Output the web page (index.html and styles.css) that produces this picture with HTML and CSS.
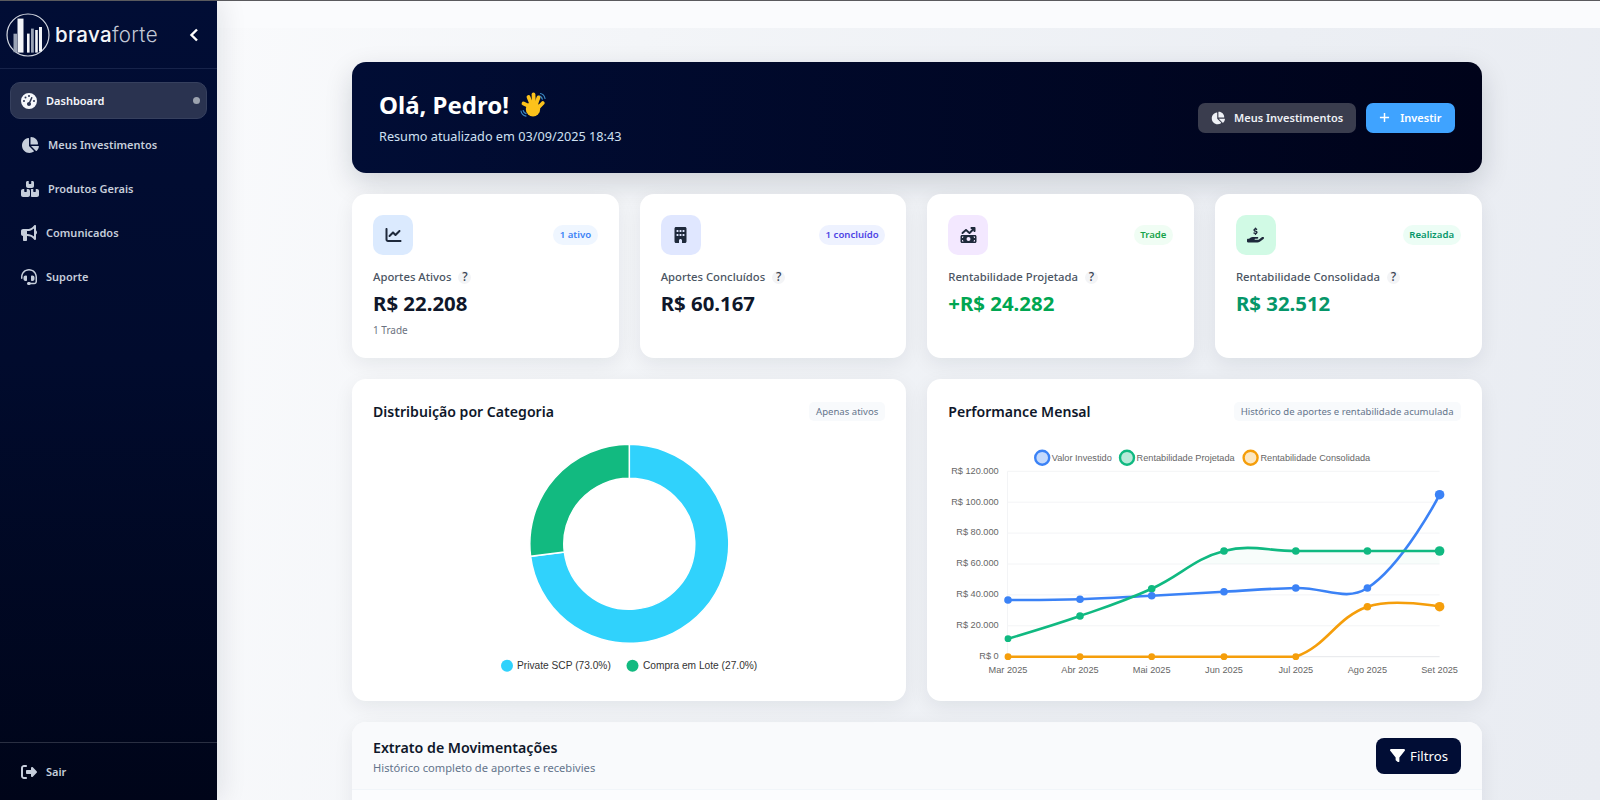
FILE: index.html
```html
<!DOCTYPE html>
<html lang="pt-BR">
<head>
<meta charset="utf-8">
<title>Dashboard - Brava Forte</title>
<link rel="stylesheet" href="styles.css">
</head>
<body>
<div class="app">
  <aside class="sidebar">
    <div class="brand">
      <svg class="logo" viewBox="0 0 44 44" aria-hidden="true">
        <circle class="logo-ring" cx="22" cy="22" r="21"/>
        <rect class="logo-dim" x="7.5" y="20.7" width="3.5" height="18.5"/>
        <rect class="logo-bar" x="11.5" y="5.6" width="6" height="34"/>
        <rect class="logo-bar" x="21" y="20.6" width="2.6" height="19"/>
        <rect class="logo-dim" x="25" y="15.6" width="2.8" height="24"/>
        <rect class="logo-bar" x="29.2" y="17" width="2.6" height="22.6"/>
        <rect class="logo-bar" x="33" y="14" width="3" height="24.6"/>
      </svg>
      <span class="wordmark"><b>brava</b>forte</span>
      <svg class="collapse" viewBox="0 0 10 14" aria-hidden="true"><path d="M8 1.5 2.5 7 8 12.5"/></svg>
    </div>
    <nav class="nav">
      <a class="nav-item active">
        <svg class="ic ic-w16" viewBox="0 0 512 512"><path d="M0 256a256 256 0 1 1 512 0A256 256 0 1 1 0 256zM288 96a32 32 0 1 0 -64 0 32 32 0 1 0 64 0zM256 416c35.3 0 64-28.7 64-64c0-17.4-6.9-33.1-18.1-44.6L366 161.7c5.3-12.1-.2-26.3-12.3-31.6s-26.3 .2-31.6 12.3L257.9 288c-.6 0-1.3 0-1.9 0c-35.3 0-64 28.7-64 64s28.7 64 64 64zM176 144a32 32 0 1 0 -64 0 32 32 0 1 0 64 0zM96 288a32 32 0 1 0 0-64 32 32 0 1 0 0 64zm352-32a32 32 0 1 0 -64 0 32 32 0 1 0 64 0z"/></svg>
        <span>Dashboard</span><i class="nav-dot"></i>
      </a>
      <a class="nav-item">
        <svg class="ic ic-w18" viewBox="0 0 576 512"><path d="M304 240V16.6c0-9 7-16.6 16-16.6C443.7 0 544 100.3 544 224c0 9-7.6 16-16.6 16H304zM32 272C32 150.7 122.1 50.3 239 34.3c9.2-1.3 17 6.1 17 15.4V288L412.5 444.5c6.7 6.7 6.2 17.7-1.5 23.1C371.8 495.6 323.8 512 272 512C139.5 512 32 404.6 32 272zm526.4 16c9.3 0 16.6 7.8 15.4 17c-7.7 55.9-34.6 105.6-73.9 142.3c-6 5.6-15.4 5.2-21.2-.7L320 288H558.4z"/></svg>
        <span>Meus Investimentos</span>
      </a>
      <a class="nav-item">
        <svg class="ic ic-w18" viewBox="0 0 576 512"><path d="M248 0H208c-26.5 0-48 21.5-48 48V160c0 35.3 28.7 64 64 64H352c35.3 0 64-28.7 64-64V48c0-26.5-21.5-48-48-48H328V80c0 8.8-7.2 16-16 16H264c-8.8 0-16-7.2-16-16V0zM64 256c-35.3 0-64 28.7-64 64V448c0 35.3 28.7 64 64 64H224c35.3 0 64-28.7 64-64V320c0-35.3-28.7-64-64-64H184v80c0 8.8-7.2 16-16 16H120c-8.8 0-16-7.2-16-16V256H64zM352 512H512c35.3 0 64-28.7 64-64V320c0-35.3-28.7-64-64-64H472v80c0 8.8-7.2 16-16 16H408c-8.8 0-16-7.2-16-16V256H352c-15 0-28.8 5.1-39.7 13.8c4.9 10.4 7.7 22 7.7 34.2V464c0 12.2-2.8 23.8-7.7 34.2C323.2 506.9 337 512 352 512z"/></svg>
        <span>Produtos Gerais</span>
      </a>
      <a class="nav-item">
        <svg class="ic ic-w16" viewBox="0 0 512 512"><path d="M480 32c0-12.9-7.8-24.6-19.8-29.6s-25.7-2.2-34.9 6.9L381.7 53c-48 48-113.1 75-181 75H192 160 64c-35.3 0-64 28.7-64 64v96c0 35.3 28.7 64 64 64l0 128c0 17.7 14.3 32 32 32h64c17.7 0 32-14.3 32-32V352l8.7 0c67.9 0 133 27 181 75l43.6 43.6c9.2 9.2 22.9 11.9 34.9 6.9s19.8-16.6 19.8-29.6V300.4c18.6-8.8 32-32.5 32-60.4s-13.4-51.6-32-60.4V32zm-64 76.7V240 371.3C357.2 317.8 280.5 288 200.7 288H192V192h8.7c79.8 0 156.5-29.8 215.3-83.3z"/></svg>
        <span>Comunicados</span>
      </a>
      <a class="nav-item">
        <svg class="ic ic-w16" viewBox="0 0 512 512"><path d="M256 48C141.1 48 48 141.1 48 256v40c0 13.3-10.7 24-24 24s-24-10.7-24-24V256C0 114.6 114.6 0 256 0S512 114.6 512 256V400.1c0 48.6-39.4 88-88.1 88L313.6 488c-8.3 14.3-23.8 24-41.6 24H240c-26.5 0-48-21.5-48-48s21.5-48 48-48h32c17.8 0 33.3 9.7 41.6 24l110.4 .1c22.1 0 40-17.9 40-40V256c0-114.9-93.1-208-208-208zM144 208h16c17.7 0 32 14.3 32 32V352c0 17.7-14.3 32-32 32H144c-35.3 0-64-28.7-64-64V272c0-35.3 28.7-64 64-64zm224 0c35.3 0 64 28.7 64 64v48c0 35.3-28.7 64-64 64H352c-17.7 0-32-14.3-32-32V240c0-17.7 14.3-32 32-32h16z"/></svg>
        <span>Suporte</span>
      </a>
    </nav>
    <div class="side-foot">
      <a class="nav-item">
        <svg class="ic ic-w16" viewBox="0 0 512 512"><path d="M377.9 105.9L500.7 228.7c7.2 7.2 11.3 17.1 11.3 27.3s-4.1 20.1-11.3 27.3L377.9 406.1c-6.4 6.4-15 9.9-24 9.9c-18.7 0-33.9-15.2-33.9-33.9l0-62.1-128 0c-17.7 0-32-14.3-32-32l0-64c0-17.7 14.3-32 32-32l128 0 0-62.1c0-18.7 15.2-33.9 33.9-33.9c9 0 17.6 3.6 24 9.9zM160 96L96 96c-17.7 0-32 14.3-32 32l0 256c0 17.7 14.3 32 32 32l64 0c17.7 0 32 14.3 32 32s-14.3 32-32 32l-64 0c-53 0-96-43-96-96L0 128C0 75 43 32 96 32l64 0c17.7 0 32 14.3 32 32s-14.3 32-32 32z"/></svg>
        <span>Sair</span>
      </a>
    </div>
  </aside>

  <main class="main">
    <div class="top-strip"></div>
    <div class="content">
      <section class="hero">
        <div class="hero-text">
          <h1 class="hero-title">Olá, Pedro!
            <svg class="wave" viewBox="0 0 26 26" aria-hidden="true">
              <g class="wave-lines"><path d="M20.5 1.5c2.4.5 4 2.3 4.5 5"/><path d="M19 3.8c1.7.3 2.9 1.5 3.3 3.3"/><path d="M1 19c.5 2.8 2.2 4.5 5 5.2"/><path d="M3.2 18.500c.4 1.600 1.300 2.600 2.900 3.100"/></g>
              <g class="wave-fingers"><path d="M13 16 3.500 11.500"/><path d="M13 16 8.500 5"/><path d="M14 15 13.500 2.500"/><path d="M15 15 18.500 5.500"/><path d="M16 18 22.800 11"/></g>
              <ellipse class="wave-palm" cx="13" cy="17" rx="7.200" ry="7.600"/>
            </svg>
          </h1>
          <p class="hero-sub">Resumo atualizado em 03/09/2025 18:43</p>
        </div>
        <div class="hero-actions">
          <a class="btn btn-ghost">
            <svg class="ic ic-w14" viewBox="0 0 576 512"><path d="M304 240V16.6c0-9 7-16.6 16-16.6C443.7 0 544 100.3 544 224c0 9-7.6 16-16.6 16H304zM32 272C32 150.7 122.1 50.3 239 34.3c9.2-1.3 17 6.1 17 15.4V288L412.5 444.5c6.7 6.7 6.2 17.7-1.5 23.1C371.8 495.6 323.8 512 272 512C139.5 512 32 404.6 32 272zm526.4 16c9.3 0 16.6 7.8 15.4 17c-7.7 55.9-34.6 105.6-73.9 142.3c-6 5.6-15.4 5.2-21.2-.7L320 288H558.4z"/></svg>
            Meus Investimentos
          </a>
          <a class="btn btn-primary">
            <svg class="btn-plus" viewBox="0 0 12 12" aria-hidden="true"><path d="M6 1v10M1 6h10"/></svg>
            Investir
          </a>
        </div>
      </section>

      <section class="stats">
        <article class="stat">
          <div class="stat-top">
            <div class="stat-icon tint-blue"><svg class="ic-dark" viewBox="0 0 512 512"><path d="M64 64c0-17.7-14.3-32-32-32S0 46.3 0 64V400c0 44.2 35.8 80 80 80H480c17.7 0 32-14.3 32-32s-14.3-32-32-32H80c-8.8 0-16-7.2-16-16V64zm406.6 86.6c12.5-12.5 12.5-32.8 0-45.3s-32.8-12.5-45.3 0L320 210.7l-57.4-57.4c-12.5-12.5-32.8-12.5-45.3 0l-112 112c-12.5 12.5-12.5 32.8 0 45.3s32.8 12.5 45.3 0L240 221.3l57.4 57.4c12.5 12.5 32.8 12.5 45.3 0l128-128z"/></svg></div>
            <span class="badge badge-blue">1 ativo</span>
          </div>
          <div class="stat-label">Aportes Ativos <i class="help">?</i></div>
          <div class="stat-value">R$ 22.208</div>
          <div class="stat-note">1 Trade</div>
        </article>
        <article class="stat">
          <div class="stat-top">
            <div class="stat-icon tint-indigo"><svg class="ic-dark" viewBox="0 0 384 512"><path d="M48 0C21.5 0 0 21.5 0 48V464c0 26.5 21.5 48 48 48h96V432c0-26.5 21.5-48 48-48s48 21.5 48 48v80h96c26.5 0 48-21.5 48-48V48c0-26.5-21.5-48-48-48H48zM64 240c0-8.8 7.2-16 16-16h32c8.8 0 16 7.2 16 16v32c0 8.8-7.2 16-16 16H80c-8.8 0-16-7.2-16-16V240zm112-16h32c8.8 0 16 7.2 16 16v32c0 8.8-7.2 16-16 16H176c-8.8 0-16-7.2-16-16V240c0-8.8 7.2-16 16-16zm80 16c0-8.8 7.2-16 16-16h32c8.8 0 16 7.2 16 16v32c0 8.8-7.2 16-16 16H272c-8.8 0-16-7.2-16-16V240zM80 96h32c8.8 0 16 7.2 16 16v32c0 8.8-7.2 16-16 16H80c-8.8 0-16-7.2-16-16V112c0-8.8 7.2-16 16-16zm80 16c0-8.8 7.2-16 16-16h32c8.8 0 16 7.2 16 16v32c0 8.8-7.2 16-16 16H176c-8.8 0-16-7.2-16-16V112zM272 96h32c8.8 0 16 7.2 16 16v32c0 8.8-7.2 16-16 16H272c-8.8 0-16-7.2-16-16V112c0-8.8 7.2-16 16-16z"/></svg></div>
            <span class="badge badge-indigo">1 concluído</span>
          </div>
          <div class="stat-label">Aportes Concluídos <i class="help">?</i></div>
          <div class="stat-value">R$ 60.167</div>
        </article>
        <article class="stat">
          <div class="stat-top">
            <div class="stat-icon tint-purple"><svg class="ic-dark" viewBox="0 0 512 512"><path d="M470.7 9.4c3 3.1 5.3 6.6 6.9 10.3s2.4 7.8 2.4 12.2l0 .1v0 96c0 17.7-14.3 32-32 32s-32-14.3-32-32V109.3L310.6 214.6c-11.8 11.8-30.8 12.6-43.5 1.7L176 138.1 84.8 216.3c-13.4 11.5-33.6 9.9-45.1-3.5s-9.9-33.6 3.5-45.1l112-96c12-10.3 29.7-10.3 41.7 0l89.5 76.7L370.7 64H352c-17.7 0-32-14.3-32-32s14.3-32 32-32h96 0c8.8 0 16.8 3.6 22.6 9.3l.1 .1zM0 304c0-26.5 21.5-48 48-48H464c26.5 0 48 21.5 48 48V464c0 26.5-21.5 48-48 48H48c-26.5 0-48-21.5-48-48V304zM48 416v48H96c0-26.5-21.5-48-48-48zM96 304H48v48c26.5 0 48-21.5 48-48zM464 416c-26.5 0-48 21.5-48 48h48V416zM416 304c0 26.5 21.5 48 48 48V304H416zm-96 80a64 64 0 1 0 -128 0 64 64 0 1 0 128 0z"/></svg></div>
            <span class="badge badge-green">Trade</span>
          </div>
          <div class="stat-label">Rentabilidade Projetada <i class="help">?</i></div>
          <div class="stat-value val-green">+R$ 24.282</div>
        </article>
        <article class="stat">
          <div class="stat-top">
            <div class="stat-icon tint-mint"><svg class="ic-dark" viewBox="0 0 576 512"><path d="M312 24V34.5c6.4 1.2 12.6 2.7 18.2 4.2c12.8 3.4 20.4 16.6 17 29.4s-16.6 20.4-29.4 17c-10.9-2.9-21.1-4.9-30.2-5c-7.3-.1-14.7 1.7-19.4 4.4c-2.1 1.3-3.1 2.4-3.5 3c-.3 .5-.7 1.2-.7 2.8c0 .3 0 .5 0 .6c.2 .2 .9 1.2 3.3 2.6c5.8 3.5 14.4 6.2 27.4 10.1l.9 .3c11.1 3.3 25.9 7.8 37.9 15.3c13.7 8.6 26.1 22.9 26.4 44.9c.3 22.5-11.4 38.9-26.7 48.5c-6.7 4.1-13.9 7-21.3 8.8V232c0 13.3-10.7 24-24 24s-24-10.7-24-24V220.6c-9.5-2.3-18.2-5.3-25.6-7.8c-2.1-.7-4.1-1.4-6-2c-12.6-4.2-19.4-17.8-15.2-30.4s17.8-19.4 30.4-15.2c2.6 .9 5 1.7 7.3 2.5c13.6 4.6 23.4 7.9 33.9 8.3c8 .3 15.1-1.6 19.2-4.1c1.9-1.2 2.8-2.2 3.2-2.9c.4-.6 .9-1.8 .8-4.1l0-.2c0-1 0-2.1-4-4.6c-5.7-3.6-14.3-6.4-27.1-10.3l-1.9-.6c-10.8-3.2-25-7.5-36.4-14.4c-13.5-8.1-26.5-22-26.6-44.1c-.1-22.9 12.9-38.6 27.7-47.4c6.4-3.8 13.3-6.4 20.2-8.2V24c0-13.3 10.7-24 24-24s24 10.7 24 24zM568.2 336.3c13.1 17.8 9.3 42.8-8.5 55.9L433.1 485.5c-23.4 17.2-51.6 26.5-80.7 26.5H192 32c-17.7 0-32-14.3-32-32V416c0-17.7 14.3-32 32-32H68.8l44.9-36c22.7-18.2 50.9-28 80-28H272h16 64c17.7 0 32 14.3 32 32s-14.3 32-32 32H288 272c-8.8 0-16 7.2-16 16s7.2 16 16 16H392.6l119.7-88.2c17.8-13.1 42.8-9.3 55.9 8.5zM193.6 384l0 0-.9 0c.3 0 .6 0 .9 0z"/></svg></div>
            <span class="badge badge-mint">Realizada</span>
          </div>
          <div class="stat-label">Rentabilidade Consolidada <i class="help">?</i></div>
          <div class="stat-value val-mint">R$ 32.512</div>
        </article>
      </section>

      <section class="charts">
        <article class="chart-card">
          <header class="chart-head">
            <h2 class="chart-title">Distribuição por Categoria</h2>
            <span class="chart-tag">Apenas ativos</span>
          </header>
          <svg class="chart-svg" viewBox="352 430 554 260" role="img">
            <g transform="translate(529.3 443.8)">
              <path class="slice slice-blue" d="M100 .5A99.5 99.5 0 1 1 1.3 112.5L35 108.2A65.5 65.5 0 1 0 100 34.5Z"/>
              <path class="slice slice-green" d="M1.3 112.5A99.5 99.5 0 0 1 100 .5L100 34.5A65.5 65.5 0 0 0 35 108.2Z"/>
            </g>
            <circle class="fill-cyan" cx="507" cy="665.7" r="6"/>
            <text class="legend-dark" x="517" y="669">Private SCP (73.0%)</text>
            <circle class="fill-green" cx="632.5" cy="665.7" r="6"/>
            <text class="legend-dark" x="642.9" y="669">Compra em Lote (27.0%)</text>
          </svg>
        </article>
        <article class="chart-card">
          <header class="chart-head">
            <h2 class="chart-title">Performance Mensal</h2>
            <span class="chart-tag">Histórico de aportes e rentabilidade acumulada</span>
          </header>
          <svg class="chart-svg" viewBox="927 430 554 260" role="img">
            <g class="grid">
              <path d="M1007.5 471.3H1439.6M1007.5 502.2H1439.6M1007.5 533.1H1439.6M1007.5 564H1439.6M1007.5 594.9H1439.6M1007.5 625.8H1439.6"/>
              <path d="M1007.5 471.3V656.7"/>
            </g>
            <path class="grid-base" d="M1007.5 656.7H1439.6"/>
            <path class="area-green" d="M1224 551C1250.9 544 1267.1 551 1295.8 551H1439.6V564H1200Z"/>

            <g class="y-labels">
              <text x="998.7" y="473.6">R$ 120.000</text>
              <text x="998.7" y="504.5">R$ 100.000</text>
              <text x="998.7" y="535.4">R$ 80.000</text>
              <text x="998.7" y="566.3">R$ 60.000</text>
              <text x="998.7" y="597.2">R$ 40.000</text>
              <text x="998.7" y="628.1">R$ 20.000</text>
              <text x="998.7" y="659">R$ 0</text>
            </g>
            <g class="x-labels">
              <text x="1008" y="673">Mar 2025</text>
              <text x="1080" y="673">Abr 2025</text>
              <text x="1151.7" y="673">Mai 2025</text>
              <text x="1224" y="673">Jun 2025</text>
              <text x="1295.8" y="673">Jul 2025</text>
              <text x="1367.4" y="673">Ago 2025</text>
              <text x="1439.6" y="673">Set 2025</text>
            </g>

            <circle class="lg lg-blue" cx="1042.2" cy="457.7" r="7"/>
            <text class="legend-grey" x="1051.7" y="461">Valor Investido</text>
            <circle class="lg lg-green" cx="1127" cy="457.7" r="7"/>
            <text class="legend-grey" x="1136.6" y="461">Rentabilidade Projetada</text>
            <circle class="lg lg-orange" cx="1250.6" cy="457.7" r="7"/>
            <text class="legend-grey" x="1260.4" y="461">Rentabilidade Consolidada</text>

            <path class="line line-blue" d="M1008 600C1008 600 1051.3 600.2 1080 599.3C1108.7 598.4 1122.9 597.2 1151.7 595.7C1180.5 594.2 1195.2 593.2 1224 591.7C1252.8 590.2 1267.1 588.7 1295.8 588C1324.5 587.3 1345.7 602.1 1367.4 588C1403.2 564.8 1439.6 494.7 1439.6 494.7"/>
            <path class="line line-green" d="M1008 638.7C1008 638.7 1051.5 625.9 1080 616C1109 605.9 1123.8 601.3 1151.7 588.7C1181.4 575.3 1193.3 559 1224 551C1250.9 544 1267.1 551 1295.8 551H1439.6"/>
            <path class="line line-orange" d="M1008 656.7H1295.8C1327.3 645.7 1335.9 617.7 1367.4 606.7C1393.4 597.7 1439.6 606.7 1439.6 606.7"/>

            <g class="pts-green">
              <circle cx="1008" cy="638.7" r="3.4"/><circle cx="1080" cy="616" r="3.8"/><circle cx="1151.7" cy="588.7" r="3.8"/><circle cx="1224" cy="551" r="3.8"/><circle cx="1295.8" cy="551" r="3.8"/><circle cx="1367.4" cy="551" r="3.8"/><circle cx="1439.6" cy="551" r="4.8"/>
            </g>
            <g class="pts-blue">
              <circle cx="1008" cy="600" r="3.8"/><circle cx="1080" cy="599.3" r="3.8"/><circle cx="1151.7" cy="595.7" r="3.8"/><circle cx="1224" cy="591.7" r="3.8"/><circle cx="1295.8" cy="588" r="3.8"/><circle cx="1367.4" cy="588" r="3.8"/><circle cx="1439.6" cy="494.7" r="4.8"/>
            </g>
            <g class="pts-orange">
              <circle cx="1008" cy="656.7" r="3.4"/><circle cx="1080" cy="656.7" r="3.4"/><circle cx="1151.7" cy="656.7" r="3.4"/><circle cx="1224" cy="656.7" r="3.4"/><circle cx="1295.8" cy="656.7" r="3.4"/><circle cx="1367.4" cy="606.7" r="3.8"/><circle cx="1439.6" cy="606.7" r="4.8"/>
            </g>
          </svg>
        </article>
      </section>

      <section class="ledger">
        <header class="ledger-head">
          <div>
            <h2 class="ledger-title">Extrato de Movimentações</h2>
            <p class="ledger-sub">Histórico completo de aportes e recebivies</p>
          </div>
          <a class="btn-filter">
            <svg class="ic ic-w15" viewBox="0 0 512 512"><path d="M3.9 54.9C10.5 40.9 24.5 32 40 32H472c15.5 0 29.5 8.9 36.1 22.9s4.6 30.5-5.2 42.5L320 320.9V448c0 12.1-6.8 23.2-17.7 28.6s-23.8 4.3-33.5-3l-64-48c-8.1-6-12.8-15.5-12.8-25.6V320.9L9 97.3C-.7 85.4-2.8 68.8 3.9 54.9z"/></svg>
            Filtros
          </a>
        </header>
        <div class="ledger-body"></div>
      </section>
    </div>
  </main>
</div>
</body>
</html>
```
FILE: styles.css
```css
* { box-sizing: border-box; }
html, body { margin: 0; height: 100%; overflow: hidden; }
body {
  border-top: 1px solid #5a5a5e;
  font-family: "Noto Sans", "Open Sans", sans-serif;
  color: #0f172a;
  background: #f8fafc;
}
h1, h2, p { margin: 0; }
a { text-decoration: none; color: inherit; }

.app { display: flex; height: 799px; }

/* Sidebar */
.sidebar {
  position: relative;
  z-index: 2;
  flex: 0 0 217px;
  display: flex;
  flex-direction: column;
  background: linear-gradient(180deg, #010d35 0%, #010b2d 45%, #000519 100%);
  box-shadow: 6px 0 24px rgba(15, 23, 42, .09);
}
.brand {
  display: flex;
  align-items: center;
  height: 68px;
  padding: 0 6px;
  border-bottom: 1px solid #17234a;
}
.logo { width: 44px; height: 44px; flex: none; }
.logo-ring { fill: none; stroke: #d5d9e2; stroke-width: 1.2; }
.logo-bar { fill: #f2f4f8; }
.logo-dim { fill: #9aa3b5; }
.wordmark {
  margin-left: 5px;
  font-family: "Inter", sans-serif;
  font-size: 20.5px;
  font-weight: 300;
  letter-spacing: .35px;
  color: #c3c9d6;
}
.wordmark b { font-weight: 500; color: #f2f4f8; }
.collapse { width: 10px; height: 14px; margin-left: auto; margin-right: 12px; fill: none; stroke: #fff; stroke-width: 2.4; }

.nav { flex: 1; display: flex; flex-direction: column; gap: 7px; padding: 13px 10px 0; }
.nav-item {
  display: flex;
  align-items: center;
  gap: 9px;
  height: 37px;
  padding: 0 10px;
  border: 1px solid transparent;
  border-radius: 10px;
  font-size: 11px;
  font-weight: 600;
  color: #c6cedb;
}
.nav-item.active { background: #2a3350; border-color: #36405e; color: #f5f7fb; }
.nav-dot { width: 7px; height: 7px; margin-left: auto; margin-right: -4px; border-radius: 50%; background: #9ca3af; }
.ic { fill: currentColor; flex: none; height: 16px; }
.ic-w14 { width: 14px; }
.ic-w16 { width: 16px; }
.ic-w18 { width: 18px; }
.ic-w15 { width: 15px; height: 15px; }
.side-foot { height: 58px; padding: 10px 10px 0; border-top: 1px solid #2a2f42; }

/* Main */
.main { flex: 1; min-width: 0; display: flex; flex-direction: column; overflow: hidden; }
.top-strip { flex: 0 0 27px; background: #fafbfd; }
.content {
  flex: 1;
  min-height: 0;
  padding: 34px 118.5px 0 135px;
  background: linear-gradient(100deg, #f9fafc 0%, #f3f5f8 28%, #eceff4 70%, #e9ecf2 100%);
}

.hero {
  display: flex;
  align-items: center;
  justify-content: space-between;
  height: 111px;
  padding: 0 27px;
  border-radius: 14px;
  background: linear-gradient(90deg, #010d35 0%, #00031a 100%);
  box-shadow: 0 10px 28px rgba(15, 23, 42, .16);
  color: #fff;
}
.hero-text { margin-top: -2px; }
.hero-title { display: flex; align-items: center; gap: 11px; font-size: 24px; font-weight: 700; line-height: 32px; }
.wave { width: 26px; height: 26px; }
.wave-lines { fill: none; stroke: #3b88c3; stroke-width: 1.2; stroke-linecap: round; }
.wave-fingers { fill: none; stroke: #fcc21b; stroke-width: 3.8; stroke-linecap: round; }
.wave-palm { fill: #fcc21b; }
.hero-sub { margin-top: 6px; font-size: 12.7px; line-height: 18px; color: #cfe0f2; }
.hero-actions { display: flex; gap: 10px; }
.btn {
  display: flex;
  align-items: center;
  gap: 9px;
  height: 30px;
  padding: 0 13px;
  border-radius: 7px;
  font-size: 11px;
  font-weight: 600;
  color: #eef1f6;
}
.btn .ic { height: 14px; }
.btn-ghost { background: #3a3d4e; }
.btn-primary { background: #3fa3ff; color: #fff; gap: 10px; }
.btn-plus { width: 11px; height: 11px; fill: none; stroke: #fff; stroke-width: 1.6; }

.stats { display: grid; grid-template-columns: repeat(4, 1fr); gap: 21px; margin-top: 21px; }
.stat {
  height: 163.5px;
  padding: 21px;
  border-radius: 14px;
  background: #fff;
  box-shadow: 0 6px 20px rgba(15, 23, 42, .07);
}
.stat-top { display: flex; align-items: center; justify-content: space-between; }
.stat-icon { display: flex; align-items: center; justify-content: center; width: 40px; height: 40px; border-radius: 10px; }
.ic-dark { width: 17px; height: 16px; fill: #1e293b; }
.tint-blue { background: #dbeafe; }
.tint-indigo { background: #e0e7ff; }
.tint-purple { background: #f3e8ff; }
.tint-mint { background: #d1fae5; }
.badge { height: 20px; padding: 0 6.5px; border-radius: 10px; font-size: 9.6px; font-weight: 600; line-height: 20px; }
.badge-blue { background: #eff6ff; color: #3b82f6; }
.badge-indigo { background: #eef2ff; color: #4f46e5; }
.badge-green { background: #f0fdf4; color: #16a34a; }
.badge-mint { background: #ecfdf5; color: #059669; }
.stat-label { display: flex; align-items: center; gap: 7px; margin-top: 13px; font-size: 11.3px; font-weight: 500; line-height: 18px; color: #4b5563; }
.help {
  display: flex; align-items: center; justify-content: center;
  width: 13px; height: 13px;
  border-radius: 50%;
  background: #f3f4f6;
  color: #374151;
  font-style: normal;
  font-size: 12px;
}
.stat-value { margin-top: 4px; font-size: 20.4px; font-weight: 700; line-height: 27px; color: #0f172a; }
.val-green { color: #00a651; }
.val-mint { color: #059669; }
.stat-note { margin-top: 6px; font-size: 10px; line-height: 14px; color: #6b7280; }

.charts { display: grid; grid-template-columns: 1fr 1fr; gap: 21px; margin-top: 21px; }
.chart-card {
  height: 322.5px;
  border-radius: 14px;
  background: #fff;
  box-shadow: 0 6px 20px rgba(15, 23, 42, .07);
}
.chart-head { display: flex; align-items: center; justify-content: space-between; height: 45px; padding: 21px 21px 0; }
.chart-title { font-size: 14.1px; font-weight: 600; color: #0f172a; }
.chart-tag { height: 19px; padding: 0 7px; border-radius: 5px; background: #f8fafc; font-size: 9.55px; line-height: 19px; color: #64748b; }
.chart-svg { display: block; width: 554px; height: 260px; margin-top: 6px; }
.chart-svg text { font-family: "Liberation Sans", Arial, sans-serif; }
.slice { stroke: #fff; stroke-width: 1.5; }
.slice-blue, .fill-cyan { fill: #30d2fc; }
.slice-green, .fill-green { fill: #12ba80; }
.legend-dark { font-size: 10.2px; fill: #333; }
.legend-grey { font-size: 9.2px; fill: #666; }
.grid path { fill: none; stroke: #f3f4f6; stroke-width: 1; }
.grid-base { fill: none; stroke: #e5e7eb; stroke-width: 1; }
.area-green { fill: rgba(16, 185, 129, .03); }
.y-labels text { font-size: 9.2px; fill: #666; text-anchor: end; }
.x-labels text { font-size: 9.2px; fill: #666; text-anchor: middle; }
.lg { stroke-width: 2.4; }
.lg-blue { stroke: #3b82f6; fill: rgba(59, 130, 246, .3); }
.lg-green { stroke: #10b981; fill: rgba(16, 185, 129, .3); }
.lg-orange { stroke: #f59e0b; fill: rgba(245, 158, 11, .25); }
.line { fill: none; stroke-width: 2.6; }
.line-blue { stroke: #3b82f6; }
.line-green { stroke: #10b981; }
.line-orange { stroke: #f59e0b; }
.pts-blue { fill: #3b82f6; }
.pts-green { fill: #10b981; }
.pts-orange { fill: #f59e0b; }

.ledger {
  margin-top: 21px;
  border-radius: 14px;
  background: #fbfcfe;
  box-shadow: 0 6px 20px rgba(15, 23, 42, .07);
}
.ledger-head {
  display: flex;
  align-items: center;
  justify-content: space-between;
  height: 68px;
  padding: 0 21px;
  border-bottom: 1px solid #f1f5f9;
  border-radius: 14px 14px 0 0;
  background: #f9fafc;
}
.ledger-title { font-size: 14.2px; font-weight: 600; line-height: 20px; color: #0f172a; margin-top: 3px; }
.ledger-sub { margin-top: 2px; font-size: 11.15px; line-height: 16px; color: #64748b; }
.btn-filter {
  display: flex;
  align-items: center;
  gap: 5.5px;
  height: 36px;
  padding: 0 12.5px 0 14px;
  border-radius: 8px;
  background: #010d35;
  font-size: 13.2px;
  color: #fff;
}
.ledger-body { height: 120px; }
```
